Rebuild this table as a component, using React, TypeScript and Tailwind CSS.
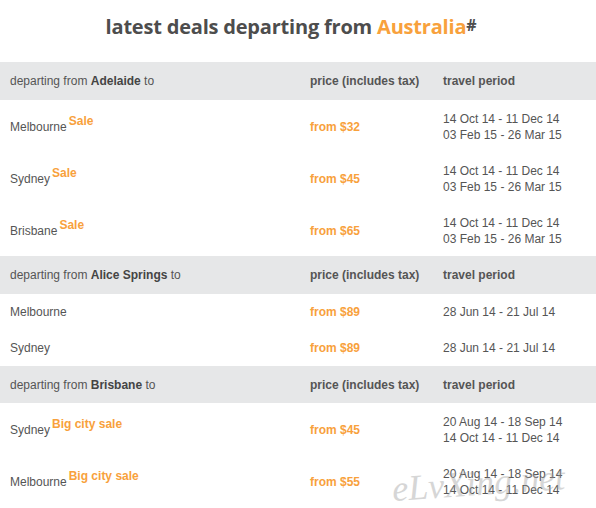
import React from 'react';

type Deal = { city: string; tag?: string; price: string; periods: string[] };
type Group = { from: string; head: string; deals: Deal[] };

const groups: Group[] = [
  {
    from: 'Adelaide',
    head: 'h-[38px]',
    deals: [
      { city: 'Melbourne', tag: 'Sale', price: 'from $32', periods: ['14 Oct 14 - 11 Dec 14', '03 Feb 15 - 26 Mar 15'] },
      { city: 'Sydney', tag: 'Sale', price: 'from $45', periods: ['14 Oct 14 - 11 Dec 14', '03 Feb 15 - 26 Mar 15'] },
      { city: 'Brisbane', tag: 'Sale', price: 'from $65', periods: ['14 Oct 14 - 11 Dec 14', '03 Feb 15 - 26 Mar 15'] },
    ],
  },
  {
    from: 'Alice Springs',
    head: 'h-[38px]',
    deals: [
      { city: 'Melbourne', price: 'from $89', periods: ['28 Jun 14 - 21 Jul 14'] },
      { city: 'Sydney', price: 'from $89', periods: ['28 Jun 14 - 21 Jul 14'] },
    ],
  },
  {
    from: 'Brisbane',
    head: 'h-[37px]',
    deals: [
      { city: 'Sydney', tag: 'Big city sale', price: 'from $45', periods: ['20 Aug 14 - 18 Sep 14', '14 Oct 14 - 11 Dec 14'] },
      { city: 'Melbourne', tag: 'Big city sale', price: 'from $55', periods: ['20 Aug 14 - 18 Sep 14', '14 Oct 14 - 11 Dec 14'] },
    ],
  },
];

const App: React.FC = () => {
  return (
    <div className="relative w-[596px] h-[508px] bg-white overflow-hidden text-[12px] text-[#555] font-['Liberation_Sans',Arial,sans-serif]">
      <div className="h-[62px] flex items-start justify-center pt-[13px] pr-[14px]">
        <h1 className="text-[20px] leading-[28px] font-bold text-[#4d4d4d] font-['Open_Sans',sans-serif] tracking-[-0.2px]">
          latest deals departing from <span className="text-[#f8a13c]">Australia</span>
          <sup className="text-[16px] text-[#4d4d4d] relative -top-[3px]">#</sup>
        </h1>
      </div>

      {groups.map((g) => (
        <div key={g.from}>
          <div className={`${g.head} bg-[#e6e7e8] flex items-center`}>
            <div className="w-[310px] pl-[10px]">
              departing from <span className="font-bold text-[#444]">{g.from}</span> to
            </div>
            <div className="w-[133px] font-bold">price (includes tax)</div>
            <div className="font-bold">travel period</div>
          </div>
          {g.deals.map((d, i) => (
            <div key={i} className={`flex items-center ${d.periods.length > 1 ? 'h-[52px] pt-[1px]' : 'h-[36px]'}`}>
              <div className="w-[310px] pl-[10px] flex items-end">
                <span>{d.city}</span>
                {d.tag && <span className="ml-[2px] font-bold text-[#f8a13c] relative -top-[6px]">{d.tag}</span>}
              </div>
              <div className="w-[133px] font-bold text-[#f8a13c]">{d.price}</div>
              <div className="leading-[16px]">
                {d.periods.map((p) => (
                  <div key={p}>{p}</div>
                ))}
              </div>
            </div>
          ))}
        </div>
      ))}

      <div className="absolute left-[392px] top-[456px] text-[36px] italic text-[#9a9a9a] opacity-40 font-['Liberation_Serif',serif] -rotate-[4deg] pointer-events-none select-none">
        eLvXing.net
      </div>
    </div>
  );
};

export default App;
